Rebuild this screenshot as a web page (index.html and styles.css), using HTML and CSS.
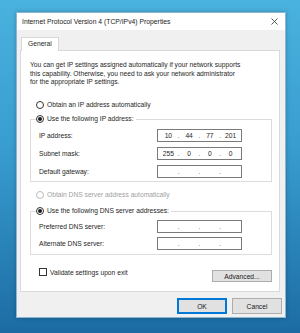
FILE: index.html
```html
<!DOCTYPE html>
<html lang="en">
<head>
  <meta charset="UTF-8">
  <title>Internet Protocol Version 4 (TCP/IPv4) Properties</title>
  <link rel="stylesheet" href="styles.css">
</head>
<body>
  <div class="window">
    <div class="titlebar">
      <span class="title">Internet Protocol Version 4 (TCP/IPv4) Properties</span>
      <svg class="close" width="7" height="7" viewBox="0 0 7 7"><path d="M0.5 0.5 L6.5 6.5 M6.5 0.5 L0.5 6.5" stroke="#444" stroke-width="0.9"/></svg>
    </div>
    <div class="content">
      <div class="tabs"><div class="tab">General</div></div>
      <div class="panel">
        <p class="intro">You can get IP settings assigned automatically if your network supports<br>this capability. Otherwise, you need to ask your network administrator<br>for the appropriate IP settings.</p>

        <div class="option first"><span class="radio"></span>Obtain an IP address automatically</div>
        <fieldset class="group ip-group">
          <legend class="option"><span class="radio on"></span>Use the following IP address:</legend>
          <div class="field">
            <span class="label">IP address:</span>
            <div class="ipbox"><span>10</span><i>.</i><span>44</span><i>.</i><span>77</span><i>.</i><span>201</span></div>
          </div>
          <div class="field">
            <span class="label">Subnet mask:</span>
            <div class="ipbox"><span>255</span><i>.</i><span>0</span><i>.</i><span>0</span><i>.</i><span>0</span></div>
          </div>
          <div class="field">
            <span class="label">Default gateway:</span>
            <div class="ipbox"><span></span><i>.</i><span></span><i>.</i><span></span><i>.</i><span></span></div>
          </div>
        </fieldset>

        <div class="option disabled dns-auto"><span class="radio"></span>Obtain DNS server address automatically</div>
        <fieldset class="group dns-group">
          <legend class="option"><span class="radio on"></span>Use the following DNS server addresses:</legend>
          <div class="field">
            <span class="label">Preferred DNS server:</span>
            <div class="ipbox"><span></span><i>.</i><span></span><i>.</i><span></span><i>.</i><span></span></div>
          </div>
          <div class="field">
            <span class="label">Alternate DNS server:</span>
            <div class="ipbox"><span></span><i>.</i><span></span><i>.</i><span></span><i>.</i><span></span></div>
          </div>
        </fieldset>

        <div class="bottom-row">
          <div class="check-row"><span class="checkbox"></span>Validate settings upon exit</div>
          <button class="button advanced">Advanced...</button>
        </div>
      </div>
      <div class="actions">
        <button class="button ok">OK</button>
        <button class="button">Cancel</button>
      </div>
    </div>
  </div>
</body>
</html>
```

FILE: styles.css
```css
html, body {
  height: 100%;
}

body {
  margin: 0;
  padding: 12px 0 0 16px;
  box-sizing: border-box;
  background: linear-gradient(180deg, #4ab2de 0%, #389ccf 45%, #1c6ca3 100%);
  font-family: 'Liberation Sans', Arial, sans-serif;
  font-size: 6.7px;
  color: #262626;
  overflow: hidden;
}

.window {
  width: 270px;
  height: 306px;
  box-sizing: border-box;
  border: 1px solid #8fb6cf;
  background: #f0f0f0;
  box-shadow: 0 0 4px rgba(0, 0, 0, 0.25);
  display: flex;
  flex-direction: column;
}

.titlebar {
  height: 17px;
  background: #fff;
  display: flex;
  align-items: center;
  justify-content: space-between;
  padding: 0 7px 0 5px;
  font-size: 6.8px;
  color: #1a1a1a;
}

.content {
  flex: 1;
  padding: 7px 5px 0 3px;
}

.tabs {
  display: flex;
  height: 13px;
  margin-left: 1px;
}

.tab {
  background: #fff;
  border: 1px solid #d9d9d9;
  border-bottom: none;
  padding: 0 6px;
  line-height: 12px;
  margin-bottom: -1px;
  position: relative;
  z-index: 1;
}

.panel {
  height: 242px;
  box-sizing: border-box;
  background: #fff;
  border: 1px solid #d9d9d9;
  padding: 10px 0 0 9px;
}

.intro {
  margin: 0;
  line-height: 8.5px;
}

.option {
  display: flex;
  align-items: center;
  height: 10px;
  line-height: 10px;
  white-space: nowrap;
}

.option.first {
  margin: 13.5px 0 0 6px;
}

.option.disabled {
  color: #a0a0a0;
}

.dns-auto {
  margin: 8px 0 0 6px;
}

.radio {
  width: 8px;
  height: 8px;
  box-sizing: border-box;
  border: 1px solid #333;
  border-radius: 50%;
  margin-right: 3px;
  display: flex;
  align-items: center;
  justify-content: center;
  background: #fff;
}

.disabled .radio {
  border-color: #bcbcbc;
}

.radio.on::after {
  content: '';
  width: 4px;
  height: 4px;
  border-radius: 50%;
  background: #1a1a1a;
}

.group {
  margin: 4px 7px 0 0;
  border: 1px solid #dcdcdc;
  padding: 0 0 3px 8px;
  min-width: 0;
}

.group legend {
  padding: 0 2px 0 0;
  margin-left: -3px;
}

.dns-group {
  margin-top: 6px;
  padding-bottom: 4px;
}

.field {
  display: flex;
  align-items: center;
  height: 13px;
  margin-top: 5px;
}

.dns-group .field {
  margin-top: 4px;
}

.label {
  width: 118px;
}

.ipbox {
  width: 85px;
  height: 13px;
  box-sizing: border-box;
  border: 1px solid #7a7a7a;
  display: flex;
  align-items: center;
  padding: 0 1px;
}

.ipbox span {
  flex: 1;
  text-align: center;
}

.ipbox i {
  font-style: normal;
  width: 2px;
  text-align: center;
  color: #555;
}

.bottom-row {
  display: flex;
  justify-content: space-between;
  align-items: flex-start;
  margin: 13px 7px 0 9px;
}

.check-row {
  display: flex;
  align-items: center;
  height: 8px;
}

.checkbox {
  width: 8px;
  height: 8px;
  box-sizing: border-box;
  border: 1px solid #333;
  margin-right: 3px;
}

.button {
  font-family: inherit;
  font-size: 6.7px;
  color: #1a1a1a;
  background: #e1e1e1;
  border: 1px solid #adadad;
  padding: 0;
  height: 16px;
  width: 50px;
}

.advanced {
  margin-top: 2px;
  height: 12px;
  width: 60px;
}

.actions {
  display: flex;
  justify-content: flex-end;
  gap: 5px;
  margin: 6px -2px 0 0;
}

.ok {
  border: 1px solid #0078d7;
  box-shadow: inset 0 0 0 1px #0078d7;
}
```
